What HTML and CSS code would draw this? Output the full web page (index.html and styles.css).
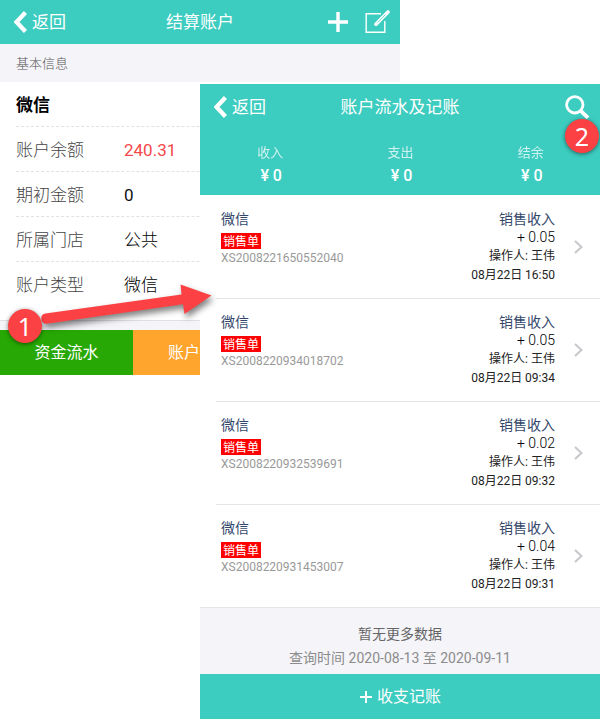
FILE: index.html
```html
<!DOCTYPE html>
<html lang="zh-CN">
<head>
  <meta charset="UTF-8" />
  <meta name="viewport" content="width=device-width, initial-scale=1.0" />
  <title>结算账户</title>
  <link rel="stylesheet" href="styles.css">
</head>
<body>
  <div class="screen account">
    <header class="navbar">
      <div class="back">
        <svg width="13" height="22" viewBox="0 0 13 22"><path d="M11.5 1.5 2.5 11l9 9.5" fill="none" stroke="#fff" stroke-width="4.4"/></svg>
        <span>返回</span>
      </div>
      <h1>结算账户</h1>
      <div class="actions">
        <svg width="20" height="20" viewBox="0 0 20 20"><path d="M10 0v20M0 10h20" stroke="#fff" stroke-width="3.4"/></svg>
        <svg width="25" height="24" viewBox="0 0 25 24"><path d="M16 3.7H1.2v18.6h18.6V11" fill="none" stroke="#fff" stroke-width="1.4"/><path d="m11 14.2 12-12.2" stroke="#fff" stroke-width="3.6" stroke-linecap="round"/><path d="m12.5 12.7 8-8.1" stroke="#3dccc0" stroke-width=".8"/></svg>
      </div>
    </header>
    <div class="section-title">基本信息</div>
    <div class="info">
      <div class="row name">微信</div>
      <div class="row"><span class="label">账户余额</span><span class="red">240.31</span></div>
      <div class="row"><span class="label">期初金额</span><span>0</span></div>
      <div class="row"><span class="label">所属门店</span><span class="cn">公共</span></div>
      <div class="row"><span class="label">账户类型</span><span class="cn">微信</span></div>
    </div>
    <div class="buttons">
      <div class="btn green">资金流水</div>
      <div class="btn orange">账户</div>
    </div>
  </div>

  <div class="screen flow">
    <header class="navbar">
      <div class="back">
        <svg width="13" height="22" viewBox="0 0 13 22"><path d="M11.5 1.5 2.5 11l9 9.5" fill="none" stroke="#fff" stroke-width="4.4"/></svg>
        <span>返回</span>
      </div>
      <h1>账户流水及记账</h1>
      <div class="actions search">
        <svg width="25" height="25" viewBox="0 0 25 25"><circle cx="9.8" cy="9.8" r="8.2" fill="none" stroke="#fff" stroke-width="2.8"/><path d="m15.8 15.8 7.2 7" stroke="#fff" stroke-width="3.8"/></svg>
      </div>
    </header>
    <div class="summary">
      <div><span>收入</span><b>¥ 0</b></div>
      <div><span>支出</span><b>¥ 0</b></div>
      <div><span>结余</span><b>¥ 0</b></div>
    </div>
    <div class="list">
      <div class="item">
        <div class="left">
          <div class="title">微信</div>
          <div class="tag">销售单</div>
          <div class="no">XS2008221650552040</div>
        </div>
        <div class="right">
          <div class="title">销售收入</div>
          <div class="money">+ 0.05</div>
          <div class="meta">操作人: 王伟</div>
          <div class="meta">08月22日 16:50</div>
        </div>
        <svg class="arrow" width="9" height="14" viewBox="0 0 9 14"><path d="m1 1 6.5 6L1 13" fill="none" stroke="#c7c7cc" stroke-width="2"/></svg>
      </div>
      <div class="item">
        <div class="left">
          <div class="title">微信</div>
          <div class="tag">销售单</div>
          <div class="no">XS2008220934018702</div>
        </div>
        <div class="right">
          <div class="title">销售收入</div>
          <div class="money">+ 0.05</div>
          <div class="meta">操作人: 王伟</div>
          <div class="meta">08月22日 09:34</div>
        </div>
        <svg class="arrow" width="9" height="14" viewBox="0 0 9 14"><path d="m1 1 6.5 6L1 13" fill="none" stroke="#c7c7cc" stroke-width="2"/></svg>
      </div>
      <div class="item">
        <div class="left">
          <div class="title">微信</div>
          <div class="tag">销售单</div>
          <div class="no">XS2008220932539691</div>
        </div>
        <div class="right">
          <div class="title">销售收入</div>
          <div class="money">+ 0.02</div>
          <div class="meta">操作人: 王伟</div>
          <div class="meta">08月22日 09:32</div>
        </div>
        <svg class="arrow" width="9" height="14" viewBox="0 0 9 14"><path d="m1 1 6.5 6L1 13" fill="none" stroke="#c7c7cc" stroke-width="2"/></svg>
      </div>
      <div class="item">
        <div class="left">
          <div class="title">微信</div>
          <div class="tag">销售单</div>
          <div class="no">XS2008220931453007</div>
        </div>
        <div class="right">
          <div class="title">销售收入</div>
          <div class="money">+ 0.04</div>
          <div class="meta">操作人: 王伟</div>
          <div class="meta">08月22日 09:31</div>
        </div>
        <svg class="arrow" width="9" height="14" viewBox="0 0 9 14"><path d="m1 1 6.5 6L1 13" fill="none" stroke="#c7c7cc" stroke-width="2"/></svg>
      </div>
    </div>
    <div class="nomore">
      <div>暂无更多数据</div>
      <div class="range">查询时间 2020-08-13 至 2020-09-11</div>
    </div>
    <div class="bottom-bar">
      <svg width="14" height="14" viewBox="0 0 14 14"><path d="M7 1v12M1 7h12" stroke="#fff" stroke-width="2"/></svg>
      <span>收支记账</span>
    </div>
  </div>

  <!-- step markers -->
  <svg class="pointer" width="230" height="70" viewBox="0 275 230 70"><path d="M45.5 313.5 181.500 294.500 180.500 284.500 211.500 295.500 184.500 314 183 304.300 46.500 323.800a5.200 5.200 0 0 1-1-10.300z" fill="#fb4143"/></svg>
  <div class="step step-1">1</div>
  <div class="step step-2">2</div>
</body>
</html>
```

FILE: styles.css
```css
* {
  box-sizing: border-box;
}
body {
  margin: 0;
  position: relative;
  width: 600px;
  height: 719px;
  overflow: hidden;
  background: #fff;
  color: #111;
  font-family: Roboto, "Noto Sans CJK SC", sans-serif;
}
svg {
  display: block;
  flex: none;
}
.screen {
  width: 400px;
}
.navbar {
  display: grid;
  grid-template-columns: 1fr auto 1fr;
  align-items: center;
  height: 44px;
  padding: 0 10px 0 14px;
  background: #3dccc0;
  color: #fff;
}
.navbar h1 {
  margin: 0;
  padding-right: 4px;
  font-size: 17px;
  font-weight: 400;
  line-height: 44px;
}
.back {
  display: flex;
  align-items: center;
  gap: 5px;
  font-size: 17px;
}
.back span {
  padding-bottom: 3px;
}
.actions {
  display: flex;
  align-items: center;
  justify-content: flex-end;
  gap: 17px;
}
.section-title {
  height: 38px;
  padding-left: 16px;
  background: #f4f4f9;
  color: #555;
  font-size: 13px;
  font-weight: 300;
  line-height: 39px;
}
.info {
  height: 239px;
  padding-left: 16px;
  border-bottom: 1px solid #e0e0e6;
}
.row {
  display: flex;
  height: 45px;
  border-bottom: 1px dashed #e2e2e2;
  font-size: 17px;
  line-height: 46px;
}
.row:last-child {
  border-bottom: 0;
}
.row.name {
  color: #000;
  font-weight: 700;
}
.label {
  width: 108px;
  color: #444;
  font-weight: 300;
}
.red {
  color: #f5484a;
}
.cn {
  color: #000;
  font-weight: 300;
}
.buttons {
  display: grid;
  grid-template-columns: 133px 67px;
  height: 54px;
  padding-top: 9px;
}
.account {
  background: linear-gradient(#f4f4f9, #f4f4f9) 0 321px / 200px 9px no-repeat;
}
.btn {
  color: #fff;
  font-size: 16px;
  line-height: 45px;
  text-align: center;
}
.green {
  background: #27a804;
}
.orange {
  padding-left: 35px;
  background: #ffa52d;
  text-align: left;
}

.flow {
  position: absolute;
  left: 200px;
  top: 84px;
  height: 635px;
  background: #fff;
}
.flow h1 {
  line-height: 46px;
}
.summary {
  display: flex;
  height: 67px;
  padding: 15px 4px 0 5px;
  background: #3dccc0;
  color: #fff;
  text-align: center;
}
.summary div {
  flex: 1;
  display: flex;
  flex-direction: column;
}
.summary span {
  font-size: 13px;
  line-height: 19px;
  opacity: .75;
}
.summary b {
  padding-left: 2px;
  font-size: 16px;
  font-weight: 500;
  line-height: 27px;
}
.item {
  display: flex;
  height: 103px;
  margin-left: 16px;
  padding: 14px 17px 0 5px;
  border-bottom: 1px solid #e5e5e8;
}
.item:first-child {
  height: 104px;
  padding-top: 15px;
}
.item:last-child {
  margin-left: 0;
  padding-left: 21px;
}
.left {
  flex: 1;
}
.title {
  color: #33476b;
  font-size: 14px;
  line-height: 19px;
}
.left .title {
  margin-bottom: 4px;
}
.tag {
  width: 40px;
  height: 16px;
  background: #f00;
  color: #fff;
  font-size: 12px;
  line-height: 18px;
  text-align: center;
}
.no {
  color: #999;
  font-size: 12px;
  line-height: 18px;
}
.right {
  text-align: right;
}
.money {
  color: #000;
  font-size: 14px;
  font-weight: 300;
  line-height: 17px;
}
.meta {
  color: #222;
  font-size: 12px;
  line-height: 21px;
}
.meta:last-child {
  line-height: 16px;
}
.arrow {
  margin: 30px 0 0 19px;
}
.nomore {
  height: 66px;
  padding-top: 14px;
  background: #f4f4f9;
  color: #666;
  font-size: 14px;
  line-height: 24px;
  text-align: center;
}
.range {
  color: #8c8c8c;
}
.bottom-bar {
  display: flex;
  align-items: center;
  justify-content: center;
  gap: 4px;
  height: 45px;
  background: #3dccc0;
  color: #fff;
  font-size: 16px;
}
.bottom-bar span {
  padding-bottom: 3px;
}

.pointer {
  position: absolute;
  left: 0;
  top: 275px;
  filter: drop-shadow(2px 4px 3px rgba(0, 0, 0, .5));
}
.step {
  position: absolute;
  width: 34px;
  height: 34px;
  border-radius: 50%;
  background: #fb4143;
  box-shadow: 0 1px 4px rgba(0, 0, 0, .5);
  color: #fff;
  font-family: "Noto Sans", "Open Sans", sans-serif;
  font-size: 25px;
  line-height: 34px;
  text-align: center;
}
.step-1 {
  left: 8px;
  top: 309px;
}
.step-2 {
  left: 565px;
  top: 119px;
}
```
